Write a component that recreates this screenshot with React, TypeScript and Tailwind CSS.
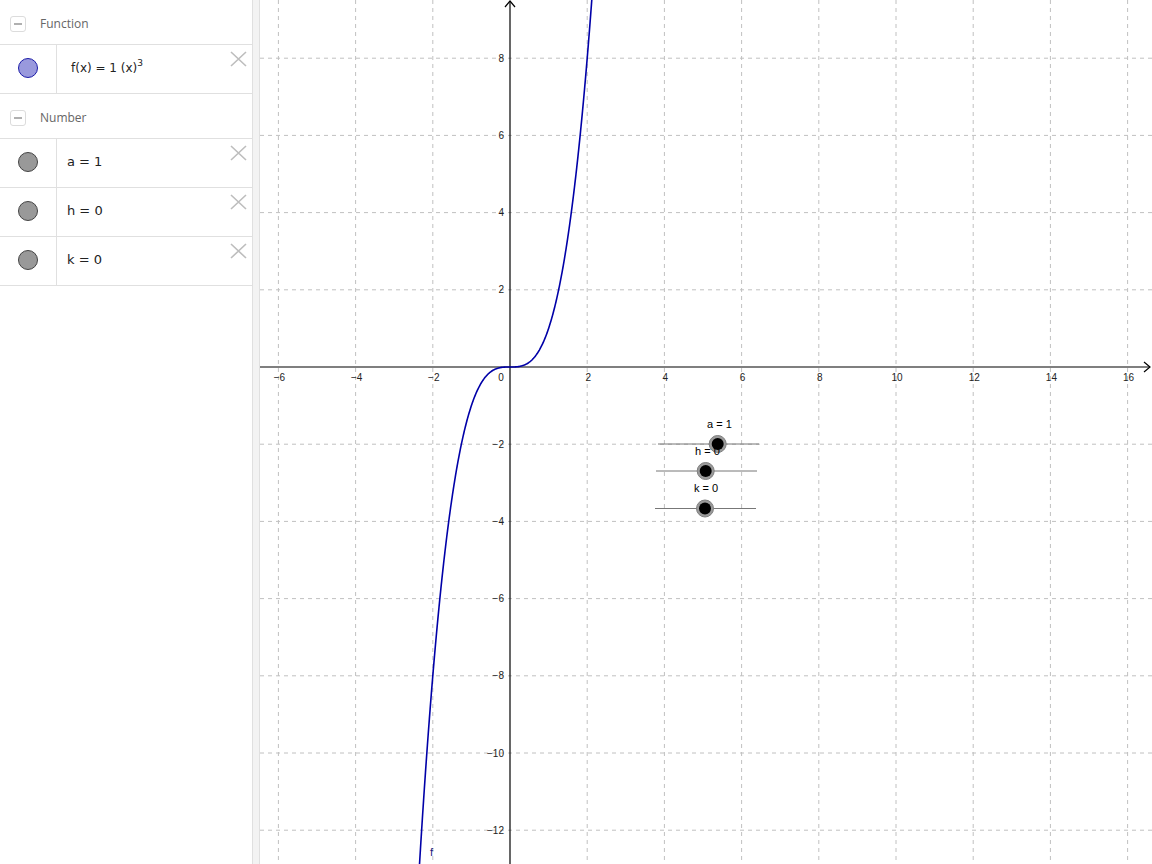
import React from "react";

const S = 38.6;
const OX = 510;
const OY = 367;

function CloseX() {
  return (
    <svg width="17" height="16" viewBox="0 0 17 16" className="absolute right-[5px] top-[6px]">
      <path d="M1 1 L16 15 M16 1 L1 15" stroke="#bdbdbd" strokeWidth="1.6" fill="none" />
    </svg>
  );
}

function Header({ label }: { label: string }) {
  return (
    <div className="h-[45px] border-b border-[#e0e0e0] flex items-center pt-[4px]">
      <div className="ml-[10px] w-[16px] h-[16px] rounded-[3px] border border-[#dcdcdc] flex items-center justify-center">
        <div className="w-[8px] h-[1.5px] bg-[#b0b0b0]" />
      </div>
      <span className="ml-[14px] text-[12px] text-[#666] font-['Open_Sans',sans-serif]">{label}</span>
    </div>
  );
}

function Row({
  children,
  fill,
  stroke,
  pad,
}: {
  children: React.ReactNode;
  fill: string;
  stroke: string;
  pad: string;
}) {
  return (
    <div className="relative h-[49px] border-b border-[#e0e0e0] flex">
      <div className="w-[57px] border-r border-[#e0e0e0] flex justify-center pt-[13px]">
        <div
          className="w-[20px] h-[20px] rounded-full border"
          style={{ backgroundColor: fill, borderColor: stroke }}
        />
      </div>
      <div
        className={`flex items-center pb-[2px] text-[#222] font-['DejaVu_Sans',sans-serif] ${pad}`}
      >
        {children}
      </div>
      <CloseX />
    </div>
  );
}

function Graph() {
  const vx: number[] = [];
  for (let k = -3; k <= 8; k++) if (k !== 0) vx.push(OX + k * 2 * S);
  const hy: number[] = [];
  for (let k = -6; k <= 4; k++) if (k !== 0) hy.push(OY - k * 2 * S);

  const pts: string[] = [];
  for (let x = -2.42; x <= 2.2; x += 0.01) {
    const px = OX + x * S;
    const py = OY - x * x * x * S;
    pts.push(`${px.toFixed(2)},${py.toFixed(2)}`);
  }

  const xl: [number, string][] = [];
  for (let k = -3; k <= 8; k++) {
    if (k === 0) continue;
    const v = k * 2;
    xl.push([OX + v * S, v < 0 ? `\u2212${-v}` : `${v}`]);
  }
  const yl: [number, string][] = [];
  for (let k = -6; k <= 4; k++) {
    if (k === 0) continue;
    const v = k * 2;
    yl.push([OY - v * S, v < 0 ? `\u2212${-v}` : `${v}`]);
  }

  return (
    <svg width="892" height="864" viewBox="260 0 892 864" className="block">
      <rect x="260" y="0" width="892" height="864" fill="#fff" />
      <g stroke="#c0c0c0" strokeWidth="1" strokeDasharray="4 4">
        {vx.map((x) => (
          <line key={"v" + x} x1={x} y1={0} x2={x} y2={864} />
        ))}
        {hy.map((y) => (
          <line key={"h" + y} x1={260} y1={y} x2={1152} y2={y} />
        ))}
      </g>
      <g stroke="#000" strokeWidth="1.2" fill="none">
        <line x1={260} y1={OY} x2={1150} y2={OY} />
        <path d={`M1144 ${OY - 5} L1150 ${OY} L1144 ${OY + 5}`} />
        <line x1={OX} y1={1} x2={OX} y2={864} />
        <path d={`M${OX - 5} 7 L${OX} 1 L${OX + 5} 7`} />
      </g>
      <g fontFamily="'Liberation Sans', Arial, sans-serif" fontSize="10" fill="#222">
        {xl.map(([x, t]) => (
          <text key={"xl" + t} x={x + 1} y={381} textAnchor="middle">
            {t}
          </text>
        ))}
        <text x={501} y={381} textAnchor="middle">0</text>
        {yl.map(([y, t]) => (
          <text key={"yl" + t} x={504} y={y + 3.5} textAnchor="end">
            {t}
          </text>
        ))}
      </g>
      <polyline points={pts.join(" ")} fill="none" stroke="#0000a8" strokeWidth="1.6" />
      <text x={430} y={856} fontFamily="'Liberation Sans', Arial, sans-serif" fontSize="11" fill="#1a1a80">
        f
      </text>
      <g fontFamily="'Liberation Sans', Arial, sans-serif" fontSize="11" fill="#000">
        <line x1={658} y1={444} x2={759} y2={444} stroke="#777" strokeWidth="1" />
        <line x1={656} y1={471} x2={757} y2={471} stroke="#777" strokeWidth="1" />
        <line x1={655} y1={508.5} x2={756} y2={508.5} stroke="#777" strokeWidth="1" />
        <text x={707} y={428}>a = 1</text>
        <g>
          <circle cx={717.7} cy={444} r={8.5} fill="#9a9a9a" stroke="#808080" strokeWidth="1" />
          <circle cx={717.7} cy={444} r={6} fill="#000" />
        </g>
        <text x={695} y={455}>h = 0</text>
        <g>
          <circle cx={705.7} cy={471} r={8.5} fill="#9a9a9a" stroke="#808080" strokeWidth="1" />
          <circle cx={705.7} cy={471} r={6} fill="#000" />
        </g>
        <text x={694} y={492}>k = 0</text>
        <g>
          <circle cx={705} cy={508.5} r={8.5} fill="#9a9a9a" stroke="#808080" strokeWidth="1" />
          <circle cx={705} cy={508.5} r={6} fill="#000" />
        </g>
      </g>
    </svg>
  );
}

export default function App() {
  return (
    <div className="w-[1152px] h-[864px] flex bg-white overflow-hidden">
      <div className="w-[253px] h-full border-r border-[#e0e0e0] flex flex-col">
        <Header label="Function" />
        <Row fill="#9999dd" stroke="#1c1ca8" pad="pl-[14px] text-[12px]">
          <span>
            f(x) = 1 (x)<sup className="text-[9px] relative top-[-6px] align-baseline">3</sup>
          </span>
        </Row>
        <Header label="Number" />
        <Row fill="#999999" stroke="#444444" pad="pl-[10px] text-[13px]">
          <span>a = 1</span>
        </Row>
        <Row fill="#999999" stroke="#444444" pad="pl-[10px] text-[13px]">
          <span>h = 0</span>
        </Row>
        <Row fill="#999999" stroke="#444444" pad="pl-[10px] text-[13px]">
          <span>k = 0</span>
        </Row>
      </div>
      <div className="w-[7px] h-full bg-[#f3f3f3] border-r border-[#e0e0e0]" />
      <div className="flex-1 h-full">
        <Graph />
      </div>
    </div>
  );
}
